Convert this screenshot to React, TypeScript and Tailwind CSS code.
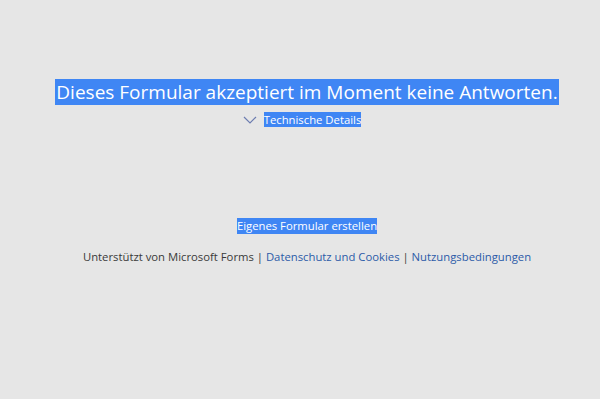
export default function App() {
  return (
    <div
      className="min-h-[399px] w-full bg-[#e6e6e6] flex flex-col items-center pt-[80px] pl-[14px]"
      style={{ fontFamily: '"Open Sans", "Noto Sans", sans-serif' }}
    >
      <h1 className="text-[19px] leading-[25px] text-white">
        <span className="bg-[#3f86f4] px-[1px]">Dieses Formular akzeptiert im Moment keine Antworten.</span>
      </h1>
      <div className="mt-[7px] ml-[-10px] flex items-center gap-[7px] text-[11.3px] leading-[15px]">
        <svg width="14" height="8" viewBox="0 0 14 8" className="text-[#6d7db0]">
          <path d="M1 1 L7 7 L13 1" fill="none" stroke="currentColor" strokeWidth="1.2" />
        </svg>
        <span className="bg-[#3f86f4] text-white">Technische Details</span>
      </div>

      <a className="mt-[91px] text-[11.3px] leading-[16px] bg-[#3f86f4] text-white">
        Eigenes Formular erstellen
      </a>

      <p className="mt-[15px] text-[11.3px] leading-[16px] text-[#3a3a3a]">
        Unterstützt von Microsoft Forms |{' '}
        <a className="text-[#2c5ba8]">Datenschutz und Cookies</a> |{' '}
        <a className="text-[#2c5ba8]">Nutzungsbedingungen</a>
      </p>
    </div>
  );
}
